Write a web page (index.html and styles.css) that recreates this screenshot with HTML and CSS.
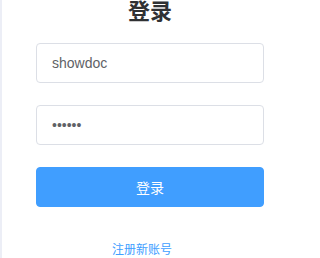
FILE: index.html
```html
<!DOCTYPE html>
<html lang="zh">
<head>
<meta charset="utf-8">
<title>登录</title>
<link rel="stylesheet" href="styles.css">
</head>
<body>
<div class="page">
  <div class="login">
    <h2 class="title">登录</h2>
    <form class="form">
      <input class="field" type="text" value="showdoc">
      <input class="field" type="password" value="123456">
      <button class="submit" type="button">登录</button>
    </form>
    <a class="register" href="#">注册新账号</a>
  </div>
</div>
</body>
</html>
```
FILE: styles.css
```css
html, body {
  margin: 0;
  padding: 0;
  background: #ffffff;
}
body {
  font-family: "Liberation Sans", "Noto Sans CJK SC", sans-serif;
}
.page {
  width: 298px;
  border-left: 2px solid #eceef6;
  min-height: 258px;
  box-sizing: border-box;
}
.login {
  display: flex;
  flex-direction: column;
  align-items: center;
}
.title {
  margin: 0;
  font-size: 22px;
  line-height: 24px;
  font-weight: bold;
  color: #303133;
}
.form {
  margin-top: 19px;
  display: flex;
  flex-direction: column;
  gap: 22px;
  width: 228px;
}
.field {
  box-sizing: border-box;
  width: 100%;
  height: 40px;
  margin: 0;
  padding: 0 15px;
  border: 1px solid #dcdfe6;
  border-radius: 4px;
  font-family: "Liberation Sans", "Noto Sans CJK SC", sans-serif;
  font-size: 14px;
  color: #606266;
  background: #fff;
  outline: none;
}
.submit {
  box-sizing: border-box;
  width: 100%;
  height: 40px;
  margin: 0;
  border: 1px solid #409eff;
  border-radius: 4px;
  background: #409eff;
  color: #ffffff;
  font-family: "Liberation Sans", "Noto Sans CJK SC", sans-serif;
  font-size: 14px;
}
.register {
  margin-top: 35px;
  margin-right: 16px;
  font-size: 12px;
  line-height: 16px;
  color: #409eff;
  text-decoration: none;
}
```
